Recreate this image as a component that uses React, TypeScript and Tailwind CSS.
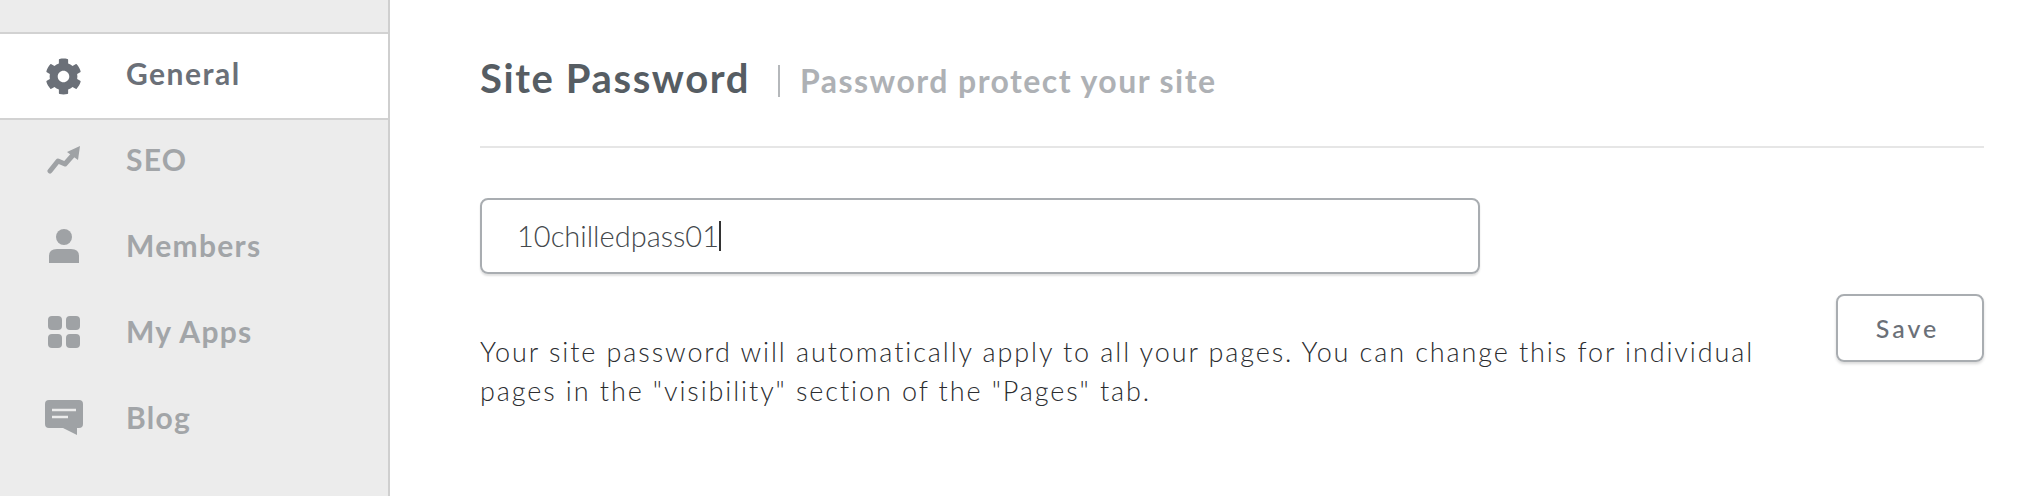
import React from "react";
import { FaCog } from "react-icons/fa";

const font = { fontFamily: "Lato, 'Open Sans', sans-serif" };

function SeoIcon() {
  return (
    <svg width="34" height="28" viewBox="0 0 34 28" fill="none">
      <path d="M3 25 L11 15 L18 18 L26 9" stroke="#9fa2a5" strokeWidth="5" strokeLinecap="round" strokeLinejoin="round" />
      <path d="M20 6 L33 0 L31 14 Z" fill="#9fa2a5" />
    </svg>
  );
}

function MemberIcon() {
  return (
    <svg width="34" height="34" viewBox="0 0 34 34" fill="#9fa2a5">
      <circle cx="17" cy="8" r="8" />
      <path d="M2 34 V27 Q2 20 10 20 H24 Q32 20 32 27 V34 Z" />
    </svg>
  );
}

function AppsIcon() {
  return (
    <svg width="34" height="34" viewBox="0 0 34 34" fill="#9fa2a5">
      <rect x="1" y="1" width="14" height="14" rx="4" />
      <rect x="19" y="1" width="14" height="14" rx="4" />
      <rect x="1" y="19" width="14" height="14" rx="4" />
      <rect x="19" y="19" width="14" height="14" rx="4" />
    </svg>
  );
}

function BlogIcon() {
  return (
    <svg width="38" height="36" viewBox="0 0 38 36" fill="none">
      <path d="M4 0 H34 Q38 0 38 4 V24 Q38 28 34 28 H32 V35 L18 28 H4 Q0 28 0 24 V4 Q0 0 4 0 Z" fill="#9fa2a5" />
      <path d="M7 10 H31 M7 17 H23" stroke="#ececec" strokeWidth="2.5" />
    </svg>
  );
}

const items = [
  { label: "SEO", icon: <SeoIcon /> },
  { label: "Members", icon: <MemberIcon /> },
  { label: "My Apps", icon: <AppsIcon /> },
  { label: "Blog", icon: <BlogIcon /> },
];

export default function App() {
  return (
    <div className="flex h-[496px] w-[2024px] overflow-hidden bg-white" style={font}>
      {/* Sidebar */}
      <aside className="w-[390px] shrink-0 border-r-2 border-[#cfcfcf] bg-[#ececec] pt-[32px]">
        <div className="flex h-[88px] items-center border-y-2 border-[#d2d2d2] bg-white">
          <div className="flex w-[126px] justify-center pl-[1px]">
            <FaCog className="text-[37px] text-[#6b7078]" />
          </div>
          <span className="pb-[5px] text-[30px] font-bold tracking-[1.5px] text-[#6b7078]">General</span>
        </div>
        {items.map((item) => (
          <div key={item.label} className="flex h-[86px] items-center pb-[7px]">
            <div className="flex w-[126px] justify-center pl-[1px]">{item.icon}</div>
            <span className="text-[30px] font-bold tracking-[1.3px] text-[#a2a5a8]">{item.label}</span>
          </div>
        ))}
      </aside>

      {/* Main */}
      <main className="flex-1 pl-[90px] pr-[40px]">
        <div className="flex h-[148px] items-center border-b-2 border-[#e6e6e6] pt-[10px]">
          <h1 className="text-[40px] font-bold tracking-[1.6px] text-[#565d63]">Site Password</h1>
          <span className="ml-[28px] mr-[20px] mt-[6px] h-[32px] w-[2px] bg-[#b5b8bb]" />
          <span className="mt-[5px] text-[32px] font-bold tracking-[1.45px] text-[#aeb1b5]">Password protect your site</span>
        </div>

        <div className="mt-[50px] flex h-[76px] w-[1000px] items-center rounded-[8px] border-2 border-[#a9adb1] pl-[35px] text-[29px] font-light text-[#44484c] shadow-[0_2px_2px_rgba(0,0,0,0.12)]">
          <span>10chilledpass01</span>
          <span className="h-[30px] w-[2px] bg-[#333]" />
        </div>

        <div className="flex items-start justify-between">
          <p className="mt-[58px] w-[1300px] text-[27px] font-light leading-[39px] tracking-[1.9px] text-[#2b2d30]">
            Your site password will automatically apply to all your pages. You can change this for individual pages in the "visibility" section of the "Pages" tab.
          </p>
          <button className="mt-[20px] flex h-[68px] w-[148px] items-center justify-center rounded-[8px] border-2 border-[#a9adb1] pr-[5px] pt-[2px] text-[25px] font-medium tracking-[3px] text-[#6b7078] shadow-[0_2px_3px_rgba(0,0,0,0.15)]">
            Save
          </button>
        </div>
      </main>
    </div>
  );
}
